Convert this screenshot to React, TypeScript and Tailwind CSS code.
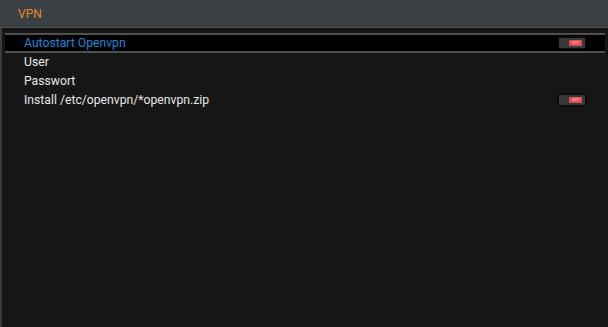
const Toggle = () => (
  <div className="flex h-[12px] w-[28px] items-center justify-end rounded-[2px] border border-[#0c0c0c] bg-[#383838] pr-[3px] shadow-[0_0_2px_#000]">
    <div className="flex h-[6px] w-[13px] items-center justify-center rounded-[1px] bg-[#e0505a] text-[4px] leading-none font-bold text-[#ff9aa0]">
      OFF
    </div>
  </div>
)

const rows = [
  { label: "Autostart Openvpn", toggle: true, selected: true },
  { label: "User" },
  { label: "Passwort" },
  { label: "Install /etc/openvpn/*openvpn.zip", toggle: true },
]

export default function App() {
  return (
    <div className="flex h-[327px] w-[608px] flex-col bg-[#161616] font-['Roboto',sans-serif]">
      <header className="flex h-[28px] items-center border-b border-[#4a4f54] bg-[#3b4045] pl-[18px] text-[12px] text-[#e08a25]">
        VPN
      </header>
      <div className="flex flex-1 border-l-2 border-[#3c3c3c] pt-[5px]">
        <ul className="flex flex-1 flex-col">
          {rows.map((r) => (
            <li
              key={r.label}
              className={
                r.selected
                  ? "mx-[3px] flex h-[20px] items-center justify-between border-y-2 border-[#505050] bg-black pr-[19px] pl-[19px] text-[12.2px] text-[#1e86dc]"
                  : "mx-[3px] flex h-[18.7px] items-center justify-between pr-[19px] pl-[19px] text-[12.2px] text-[#e6e6e6]"
              }
            >
              <span>{r.label}</span>
              {r.toggle && <Toggle />}
            </li>
          ))}
        </ul>
      </div>
    </div>
  )
}
